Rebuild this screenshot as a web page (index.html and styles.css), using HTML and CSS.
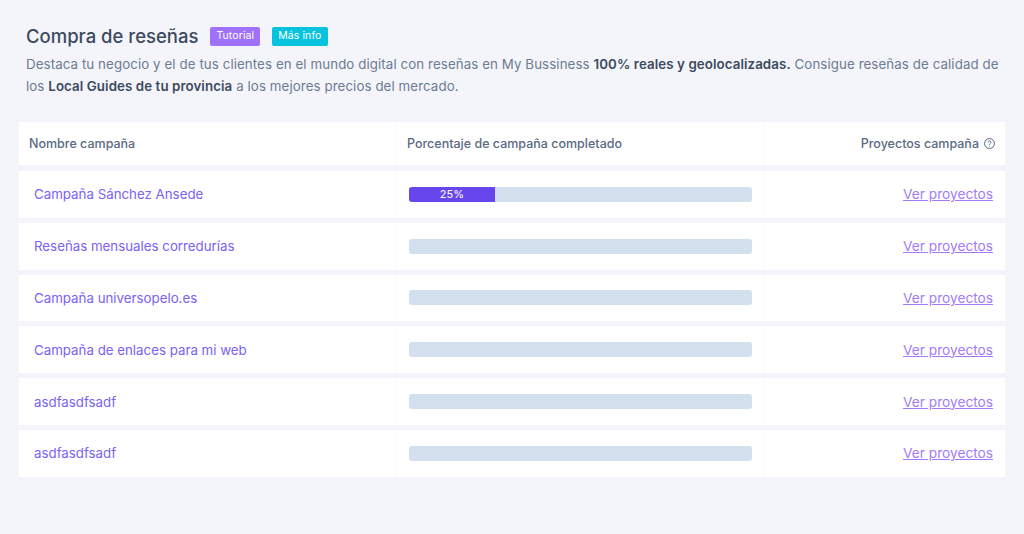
FILE: index.html
```html
<!doctype html>
<html>
<head>
<meta charset="utf-8">
<title>Compra de reseñas</title>
<link rel="stylesheet" href="styles.css">
</head>
<body>
<div class="page">
	<div class="intro">
		<div class="title-row">
			<h1>Compra de reseñas</h1>
			<a class="tag tag-purple" href="#">Tutorial</a>
			<a class="tag tag-cyan" href="#">Más info</a>
		</div>
		<p>Destaca tu negocio y el de tus clientes en el mundo digital con reseñas en My Bussiness <b>100% reales y geolocalizadas.</b> Consigue reseñas de calidad de<br>los <b>Local Guides de tu provincia</b> a los mejores precios del mercado.</p>
	</div>

	<div class="campaigns">
		<div class="row head">
			<div class="cell">Nombre campaña</div>
			<div class="cell">Porcentaje de campaña completado</div>
			<div class="cell cell-right">
				Proyectos campaña
				<svg class="help" viewBox="0 0 12 12" width="11" height="11">
					<circle cx="6" cy="6" r="5.4"/>
					<path d="M4.4 4.7a1.6 1.6 0 1 1 2.5 1.3c-.6.4-.9.7-.9 1.3"/>
					<path d="M6 8.6v.6"/>
				</svg>
			</div>
		</div>

		<div class="row">
			<div class="cell name"><a href="#">Campaña Sánchez Ansede</a></div>
			<div class="cell"><div class="bar"><div class="bar-fill" style="width:25%">25%</div></div></div>
			<div class="cell cell-right"><a class="more" href="#">Ver proyectos</a></div>
		</div>
		<div class="row">
			<div class="cell name"><a href="#">Reseñas mensuales corredurías</a></div>
			<div class="cell"><div class="bar"></div></div>
			<div class="cell cell-right"><a class="more" href="#">Ver proyectos</a></div>
		</div>
		<div class="row">
			<div class="cell name"><a href="#">Campaña universopelo.es</a></div>
			<div class="cell"><div class="bar"></div></div>
			<div class="cell cell-right"><a class="more" href="#">Ver proyectos</a></div>
		</div>
		<div class="row">
			<div class="cell name"><a href="#">Campaña de enlaces para mi web</a></div>
			<div class="cell"><div class="bar"></div></div>
			<div class="cell cell-right"><a class="more" href="#">Ver proyectos</a></div>
		</div>
		<div class="row">
			<div class="cell name"><a href="#">asdfasdfsadf</a></div>
			<div class="cell"><div class="bar"></div></div>
			<div class="cell cell-right"><a class="more" href="#">Ver proyectos</a></div>
		</div>
		<div class="row">
			<div class="cell name"><a href="#">asdfasdfsadf</a></div>
			<div class="cell"><div class="bar"></div></div>
			<div class="cell cell-right"><a class="more" href="#">Ver proyectos</a></div>
		</div>
	</div>
</div>
</body>
</html>
```

FILE: styles.css
```css
html, body
{
	margin: 0;
	height: 100%;
}
body
{
	background-color: #f4f5fa;
	font-family: "Inter", "Liberation Sans", sans-serif;
	color: #6e7b91;
	overflow: hidden;
}
.page
{
	padding: 24px 19px 0 19px;
}

/*title and description*/
.intro
{
	padding: 0 7px;
}
.title-row
{
	display: flex;
	align-items: center;
	height: 24px;
}
h1
{
	margin: 0 12px 0 0;
	font-size: 18.5px;
	font-weight: 500;
	color: #3d4a60;
}
.tag
{
	display: block;
	height: 19px;
	line-height: 18px;
	padding: 0 6px;
	margin-right: 12px;
	border-radius: 2px;
	font-size: 10.5px;
	letter-spacing: 0.1px;
	color: #fff;
	text-decoration: none;
}
.tag-purple { background-color: #a071fb; }
.tag-cyan { background-color: #07c3de; }
.intro p
{
	margin: 6px 0 0 0;
	font-size: 13.3px;
	line-height: 21.5px;
	letter-spacing: 0.09px;
	white-space: nowrap;
	color: #6e7b91;
}
.intro b
{
	font-weight: 600;
	color: #3d4a60;
}

/*campaign list*/
.campaigns
{
	margin-top: 25px;
	display: grid;
	row-gap: 5px;
}
.row
{
	display: grid;
	grid-template-columns: 378px 368px 240px;
	height: 46.8px;
	background-color: #fff;
}
.head
{
	height: 43px;
	margin-bottom: 1px;
	font-size: 12.5px;
	font-weight: 500;
	color: #5a6a83;
}
.cell
{
	display: flex;
	align-items: center;
	padding: 0 12px;
	border-right: 1px solid #f8f9fb;
}
.head .cell
{
	padding: 0 10px;
}
.cell-right
{
	justify-content: flex-end;
	border-right: none;
}
.name
{
	padding: 0 15px;
	font-size: 13.3px;
}
.name a
{
	color: #7b61f5;
	text-decoration: none;
}
.help
{
	margin-left: 5px;
	fill: none;
	stroke: #4f5e76;
	stroke-width: 1;
}
.bar
{
	width: 343px;
	height: 15px;
	border-radius: 3px;
	background-color: #d3e0ee;
	overflow: hidden;
}
.bar-fill
{
	height: 100%;
	background-color: #6747ed;
	color: #fff;
	font-size: 11px;
	line-height: 15px;
	text-align: center;
}
.more
{
	font-size: 13.7px;
	color: #a27bfb;
}
```
